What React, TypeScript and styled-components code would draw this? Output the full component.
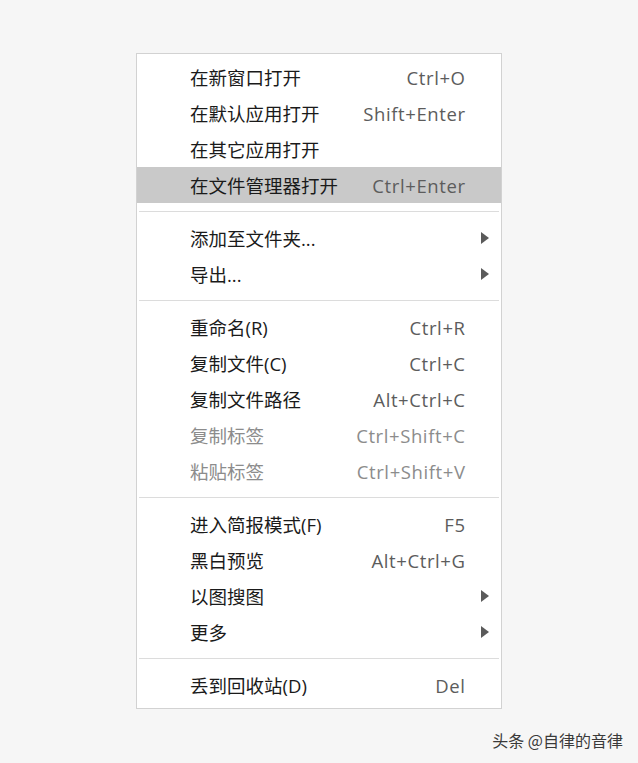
import React from 'react'
import styled, { createGlobalStyle } from 'styled-components'

const GlobalStyle = createGlobalStyle`
  html, body {
    margin: 0;
    padding: 0;
    background: #f6f6f6;
  }
  body {
    font-family: "Open Sans", "Noto Sans CJK SC", sans-serif;
  }
`

const Page = styled.div`
  width: 638px;
  height: 763px;
  padding-top: 53px;
  box-sizing: border-box;
  display: flex;
  flex-direction: column;
`

const Menu = styled.ul`
  list-style: none;
  margin: 0 0 0 136px;
  padding: 5px 0;
  width: 366px;
  box-sizing: border-box;
  background: #ffffff;
  border: 1px solid #d2d2d2;
`

const Item = styled.li<{ $active?: boolean; $disabled?: boolean }>`
  display: flex;
  align-items: center;
  height: 36px;
  padding: 0 36px 0 53px;
  font-size: 18.5px;
  color: ${(p) => (p.$disabled ? '#8c8c8c' : '#1a1a1a')};
  background: ${(p) => (p.$active ? '#c9c9c9' : 'transparent')};
  position: relative;
`

const Label = styled.span`
  flex: 1;
  white-space: nowrap;
`

const Shortcut = styled.span<{ $disabled?: boolean }>`
  color: ${(p) => (p.$disabled ? '#8c8c8c' : '#5c5c5c')};
  font-size: 18.5px;
  letter-spacing: 0.6px;
  margin-right: -0.6px;
  white-space: nowrap;
`

const Arrow = styled.span`
  position: absolute;
  right: 12px;
  top: 50%;
  margin-top: -6px;
  width: 0;
  height: 0;
  border-top: 6px solid transparent;
  border-bottom: 6px solid transparent;
  border-left: 8px solid #5a5a5a;
`

const Separator = styled.li`
  height: 1px;
  margin: 8px 2px;
  background: #dcdcdc;
`

const Watermark = styled.div`
  align-self: flex-end;
  margin: 19px 15px 0 0;
  font-family: "Noto Sans CJK SC", sans-serif;
  font-size: 16px;
  color: #3a3a3a;
`

type Entry =
  | { sep: true }
  | { label: string; key?: string; sub?: boolean; active?: boolean; disabled?: boolean }

const entries: Entry[] = [
  { label: '在新窗口打开', key: 'Ctrl+O' },
  { label: '在默认应用打开', key: 'Shift+Enter' },
  { label: '在其它应用打开' },
  { label: '在文件管理器打开', key: 'Ctrl+Enter', active: true },
  { sep: true },
  { label: '添加至文件夹...', sub: true },
  { label: '导出...', sub: true },
  { sep: true },
  { label: '重命名(R)', key: 'Ctrl+R' },
  { label: '复制文件(C)', key: 'Ctrl+C' },
  { label: '复制文件路径', key: 'Alt+Ctrl+C' },
  { label: '复制标签', key: 'Ctrl+Shift+C', disabled: true },
  { label: '粘贴标签', key: 'Ctrl+Shift+V', disabled: true },
  { sep: true },
  { label: '进入简报模式(F)', key: 'F5' },
  { label: '黑白预览', key: 'Alt+Ctrl+G' },
  { label: '以图搜图', sub: true },
  { label: '更多', sub: true },
  { sep: true },
  { label: '丢到回收站(D)', key: 'Del' },
]

export default function App() {
  return (
    <Page>
      <GlobalStyle />
      <Menu>
        {entries.map((e, i) =>
          'sep' in e ? (
            <Separator key={i} />
          ) : (
            <Item key={i} $active={e.active} $disabled={e.disabled}>
              <Label>{e.label}</Label>
              {e.key && <Shortcut $disabled={e.disabled}>{e.key}</Shortcut>}
              {e.sub && <Arrow />}
            </Item>
          )
        )}
      </Menu>
      <Watermark>头条 @自律的音律</Watermark>
    </Page>
  )
}
